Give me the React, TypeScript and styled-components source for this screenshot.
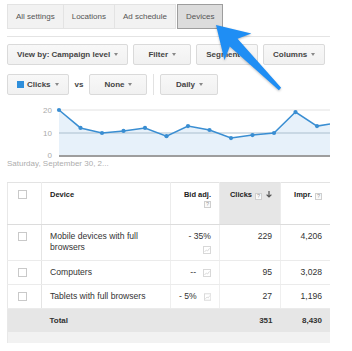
import React from "react";
import styled, { createGlobalStyle, css } from "styled-components";

const GlobalStyle = createGlobalStyle`
  html, body {
    margin: 0;
    padding: 0;
    background: #fff;
  }
  body {
    font-family: "Liberation Sans", Arial, Helvetica, sans-serif;
    color: #333;
  }
`;

const Screen = styled.div`
  position: relative;
  width: 352px;
  height: 351px;
  overflow: hidden;
`;

const Page = styled.div`
  width: 323px;
  margin-left: 7px;
  padding-top: 4px;
  overflow: hidden;
`;

const TabBar = styled.div`
  display: flex;
  height: 25px;
`;

const Tab = styled.div<{ $active?: boolean }>`
  display: flex;
  align-items: center;
  box-sizing: border-box;
  padding: 0 8px;
  font-size: 8px;
  color: #555;
  white-space: nowrap;
  background: #f2f2f2;
  border: 1px solid #e3e3e3;
  & + & {
    margin-left: -1px;
  }
  ${(p) =>
    p.$active &&
    css`
      && {
        margin-left: 1px;
        background: #dcdcdc;
        border-color: #9d9d9d;
        color: #555;
      }
    `}
`;

const Rule = styled.div`
  height: 1px;
  margin-top: 7px;
  background: #e4e4e4;
`;

const Toolbar = styled.div<{ $gap: number; $top: number }>`
  display: flex;
  align-items: stretch;
  height: 21px;
  margin-top: ${(p) => p.$top}px;
  gap: ${(p) => p.$gap}px;
`;

const DropButton = styled.div<{ $minW?: number }>`
  display: flex;
  flex: none;
  align-items: center;
  justify-content: center;
  gap: 4px;
  box-sizing: border-box;
  min-width: ${(p) => p.$minW ?? 58}px;
  padding: 0 9px;
  background: linear-gradient(#f8f8f8, #f1f1f1);
  border: 1px solid #dadada;
  border-radius: 2px;
  font-size: 8px;
  font-weight: bold;
  color: #444;
  white-space: nowrap;
`;

const Caret = styled.span`
  width: 0;
  height: 0;
  border-left: 2.5px solid transparent;
  border-right: 2.5px solid transparent;
  border-top: 3px solid #888;
`;

const Swatch = styled.span`
  width: 7px;
  height: 7px;
  margin-right: -1px;
  background: #2f8fdb;
`;

const Vs = styled.span`
  align-self: center;
  font-size: 8px;
  font-weight: bold;
  color: #444;
`;

const Sep = styled.div`
  flex: none;
  width: 1px;
  background: #e2e2e2;
`;

const ChartSvg = styled.svg`
  display: block;
  margin-top: 7px;
  overflow: visible;
`;

const Caption = styled.div`
  height: 10px;
  margin-top: 1px;
  font-size: 8px;
  line-height: 10px;
  color: #adadad;
  white-space: nowrap;
`;

const Grid = styled.table`
  width: 323px;
  margin-top: 13px;
  border-collapse: collapse;
  table-layout: fixed;
  border-top: 1px solid #e3e3e3;
  border-left: 1px solid #e8e8e8;
  border-right: 1px solid #e8e8e8;
`;

const Col = styled.col<{ $w: number }>`
  width: ${(p) => p.$w}px;
`;

const HeadRow = styled.tr`
  height: 42px;
`;

const HeadCell = styled.th<{ $align?: "left" | "right"; $sorted?: boolean; $check?: boolean }>`
  padding: ${(p) => (p.$check ? "6px 0 6px 10px" : "6px 8px")};
  vertical-align: top;
  text-align: ${(p) => p.$align ?? "left"};
  font-size: 7.5px;
  line-height: 11px;
  font-weight: bold;
  color: #222;
  white-space: nowrap;
  background: ${(p) => (p.$sorted ? "#e6e6e6" : "#fff")};
  border-right: 1px solid #ececec;
  border-bottom: 1px solid #dcdcdc;
`;

const Cell = styled.td<{ $align?: "left" | "right"; $check?: boolean }>`
  padding: ${(p) => (p.$check ? "6px 0 6px 10px" : "6px 8px")};
  vertical-align: top;
  text-align: ${(p) => p.$align ?? "left"};
  font-size: 8.6px;
  line-height: 11px;
  color: #333;
  border-right: 1px solid ${(p) => (p.$check ? "#e4e4e4" : "#efefef")};
  border-bottom: 1px solid #ebebeb;
`;

const TotalRow = styled.tr`
  background: #e6e6e6;
  td {
    font-weight: bold;
    font-size: 8px;
    border-right: none;
    border-bottom: none;
  }
`;

const BandCell = styled.td`
  height: 11px;
  padding: 0;
  background: #f2f2f2;
`;

const Checkbox = styled.span`
  display: block;
  box-sizing: border-box;
  width: 9px;
  height: 9px;
  margin-top: 1px;
  background: #fff;
  border: 1px solid #c9c9c9;
`;

const Help = styled.span`
  display: inline-flex;
  align-items: center;
  justify-content: center;
  box-sizing: border-box;
  width: 7px;
  height: 7px;
  margin-left: 3px;
  vertical-align: -1px;
  background: #fafafa;
  border: 1px solid #cfcfcf;
  color: #999;
  font-size: 5.5px;
  font-weight: normal;
  line-height: 1;
`;

const HelpLine = styled.div`
  display: flex;
  justify-content: flex-end;
  margin-top: 1px;
`;

const SortIcon = styled.svg`
  margin-left: 4px;
  vertical-align: -1px;
`;

const BidValue = styled.div<{ $stack?: boolean }>`
  display: flex;
  justify-content: flex-end;
  align-items: center;
  gap: 7px;
  white-space: nowrap;
  ${(p) =>
    p.$stack &&
    css`
      flex-direction: column;
      align-items: flex-end;
      gap: 4px;
    `}
`;

const ArrowLayer = styled.svg`
  position: absolute;
  left: 0;
  top: 0;
  pointer-events: none;
  filter: drop-shadow(0 1px 1px rgba(0, 0, 0, 0.25));
`;

const TrendIcon = () => (
  <svg width="8" height="8" viewBox="0 0 8 8">
    <rect x="0.5" y="0.5" width="7" height="7" fill="#fff" stroke="#d8d8d8" />
    <path d="M1.5 6 L3.3 4 L4.6 5 L6.5 2.3" fill="none" stroke="#d2d2d2" strokeWidth="0.8" />
  </svg>
);

const clicks = [20, 12.2, 10, 10.9, 12.2, 8.6, 13, 11.3, 7.8, 9.1, 10, 19.1, 13];
const lastClicks = 13.9;
const xAt = (i: number) => 59 + i * 21.5;
const yAt = (v: number) => 156 - v * 2.3;

const linePts = clicks.map((v, i) => `${xAt(i)},${yAt(v)}`).concat(`330,${yAt(lastClicks)}`);

const arrowPoints = () => {
  const tip = [216, 25];
  const tail = [280, 89];
  const dx = tail[0] - tip[0];
  const dy = tail[1] - tip[1];
  const len = Math.hypot(dx, dy);
  const u = [dx / len, dy / len];
  const n = [-u[1], u[0]];
  const P = (a: number, b: number) =>
    `${tip[0] + u[0] * a + n[0] * b},${tip[1] + u[1] * a + n[1] * b}`;
  return [
    P(0, 0),
    P(31, -19),
    P(25, -5.5),
    P(len, -1.6),
    P(len, 1.6),
    P(25, 5.5),
    P(31, 19),
  ].join(" ");
};

const devices = [
  { name: "Mobile devices with full browsers", bid: "- 35%", stack: true, clicks: "229", impr: "4,206" },
  { name: "Computers", bid: "--", clicks: "95", impr: "3,028" },
  { name: "Tablets with full browsers", bid: "- 5%", clicks: "27", impr: "1,196" },
];

export default function App() {
  return (
    <Screen>
      <GlobalStyle />
      <Page>
        <TabBar>
          <Tab>All settings</Tab>
          <Tab>Locations</Tab>
          <Tab>Ad schedule</Tab>
          <Tab $active>Devices</Tab>
        </TabBar>
        <Rule />

        <Toolbar $gap={5} $top={7}>
          <DropButton>
            View by: Campaign level <Caret />
          </DropButton>
          <DropButton>
            Filter <Caret />
          </DropButton>
          <DropButton $minW={60}>
            Segment <Caret />
          </DropButton>
          <DropButton $minW={62}>
            Columns <Caret />
          </DropButton>
          <Sep />
        </Toolbar>

        <Toolbar $gap={6} $top={9}>
          <DropButton $minW={60}>
            <Swatch />
            Clicks <Caret />
          </DropButton>
          <Vs>vs</Vs>
          <DropButton>
            None <Caret />
          </DropButton>
          <Sep />
          <DropButton>
            Daily <Caret />
          </DropButton>
        </Toolbar>

        <ChartSvg width="323" height="56" viewBox="7 102 323 56">
          <polygon points={`59,156 ${linePts.join(" ")} 330,156`} fill="#e7f1fa" />
          <line x1="59" y1="110" x2="330" y2="110" stroke="#e2e2e2" />
          <line x1="59" y1="133" x2="330" y2="133" stroke="#abbfce" />
          <line x1="59" y1="156" x2="330" y2="156" stroke="#9e9e9e" strokeWidth="2" />
          <polyline points={linePts.join(" ")} fill="none" stroke="#3a8ed2" strokeWidth="1.5" />
          {clicks.map((v, i) => (
            <circle key={i} cx={xAt(i)} cy={yAt(v)} r="2.1" fill="#3a8ed2" />
          ))}
          <g fontSize="8" fill="#aaa" textAnchor="end" fontFamily="Liberation Sans, Arial, sans-serif">
            <text x="52" y="113">20</text>
            <text x="52" y="136">10</text>
            <text x="52" y="158">0</text>
          </g>
        </ChartSvg>
        <Caption>Saturday, September 30, 2...</Caption>

        <Grid>
          <colgroup>
            <Col $w={34} />
            <Col $w={129} />
            <Col $w={49} />
            <Col $w={61} />
            <Col $w={50} />
          </colgroup>
          <thead>
            <HeadRow>
              <HeadCell $check>
                <Checkbox />
              </HeadCell>
              <HeadCell>Device</HeadCell>
              <HeadCell $align="right">
                Bid adj.
                <HelpLine>
                  <Help>?</Help>
                </HelpLine>
              </HeadCell>
              <HeadCell $align="right" $sorted>
                Clicks
                <Help>?</Help>
                <SortIcon width="6" height="7" viewBox="0 0 6 7">
                  <path d="M3 0 V6 M0.6 3.6 L3 6 L5.4 3.6" fill="none" stroke="#555" strokeWidth="1.2" />
                </SortIcon>
              </HeadCell>
              <HeadCell $align="right">
                Impr.
                <Help>?</Help>
              </HeadCell>
            </HeadRow>
          </thead>
          <tbody>
            {devices.map((d) => (
              <tr key={d.name}>
                <Cell $check>
                  <Checkbox />
                </Cell>
                <Cell>{d.name}</Cell>
                <Cell $align="right">
                  <BidValue $stack={d.stack}>
                    <span>{d.bid}</span>
                    <TrendIcon />
                  </BidValue>
                </Cell>
                <Cell $align="right">{d.clicks}</Cell>
                <Cell $align="right">{d.impr}</Cell>
              </tr>
            ))}
            <TotalRow>
              <Cell $check />
              <Cell>Total</Cell>
              <Cell />
              <Cell $align="right">351</Cell>
              <Cell $align="right">8,430</Cell>
            </TotalRow>
            <tr>
              <BandCell colSpan={5} />
            </tr>
          </tbody>
        </Grid>
      </Page>

      <ArrowLayer width="352" height="120" viewBox="0 0 352 120">
        <polygon points={arrowPoints()} fill="#1f8ef4" />
      </ArrowLayer>
    </Screen>
  );
}
